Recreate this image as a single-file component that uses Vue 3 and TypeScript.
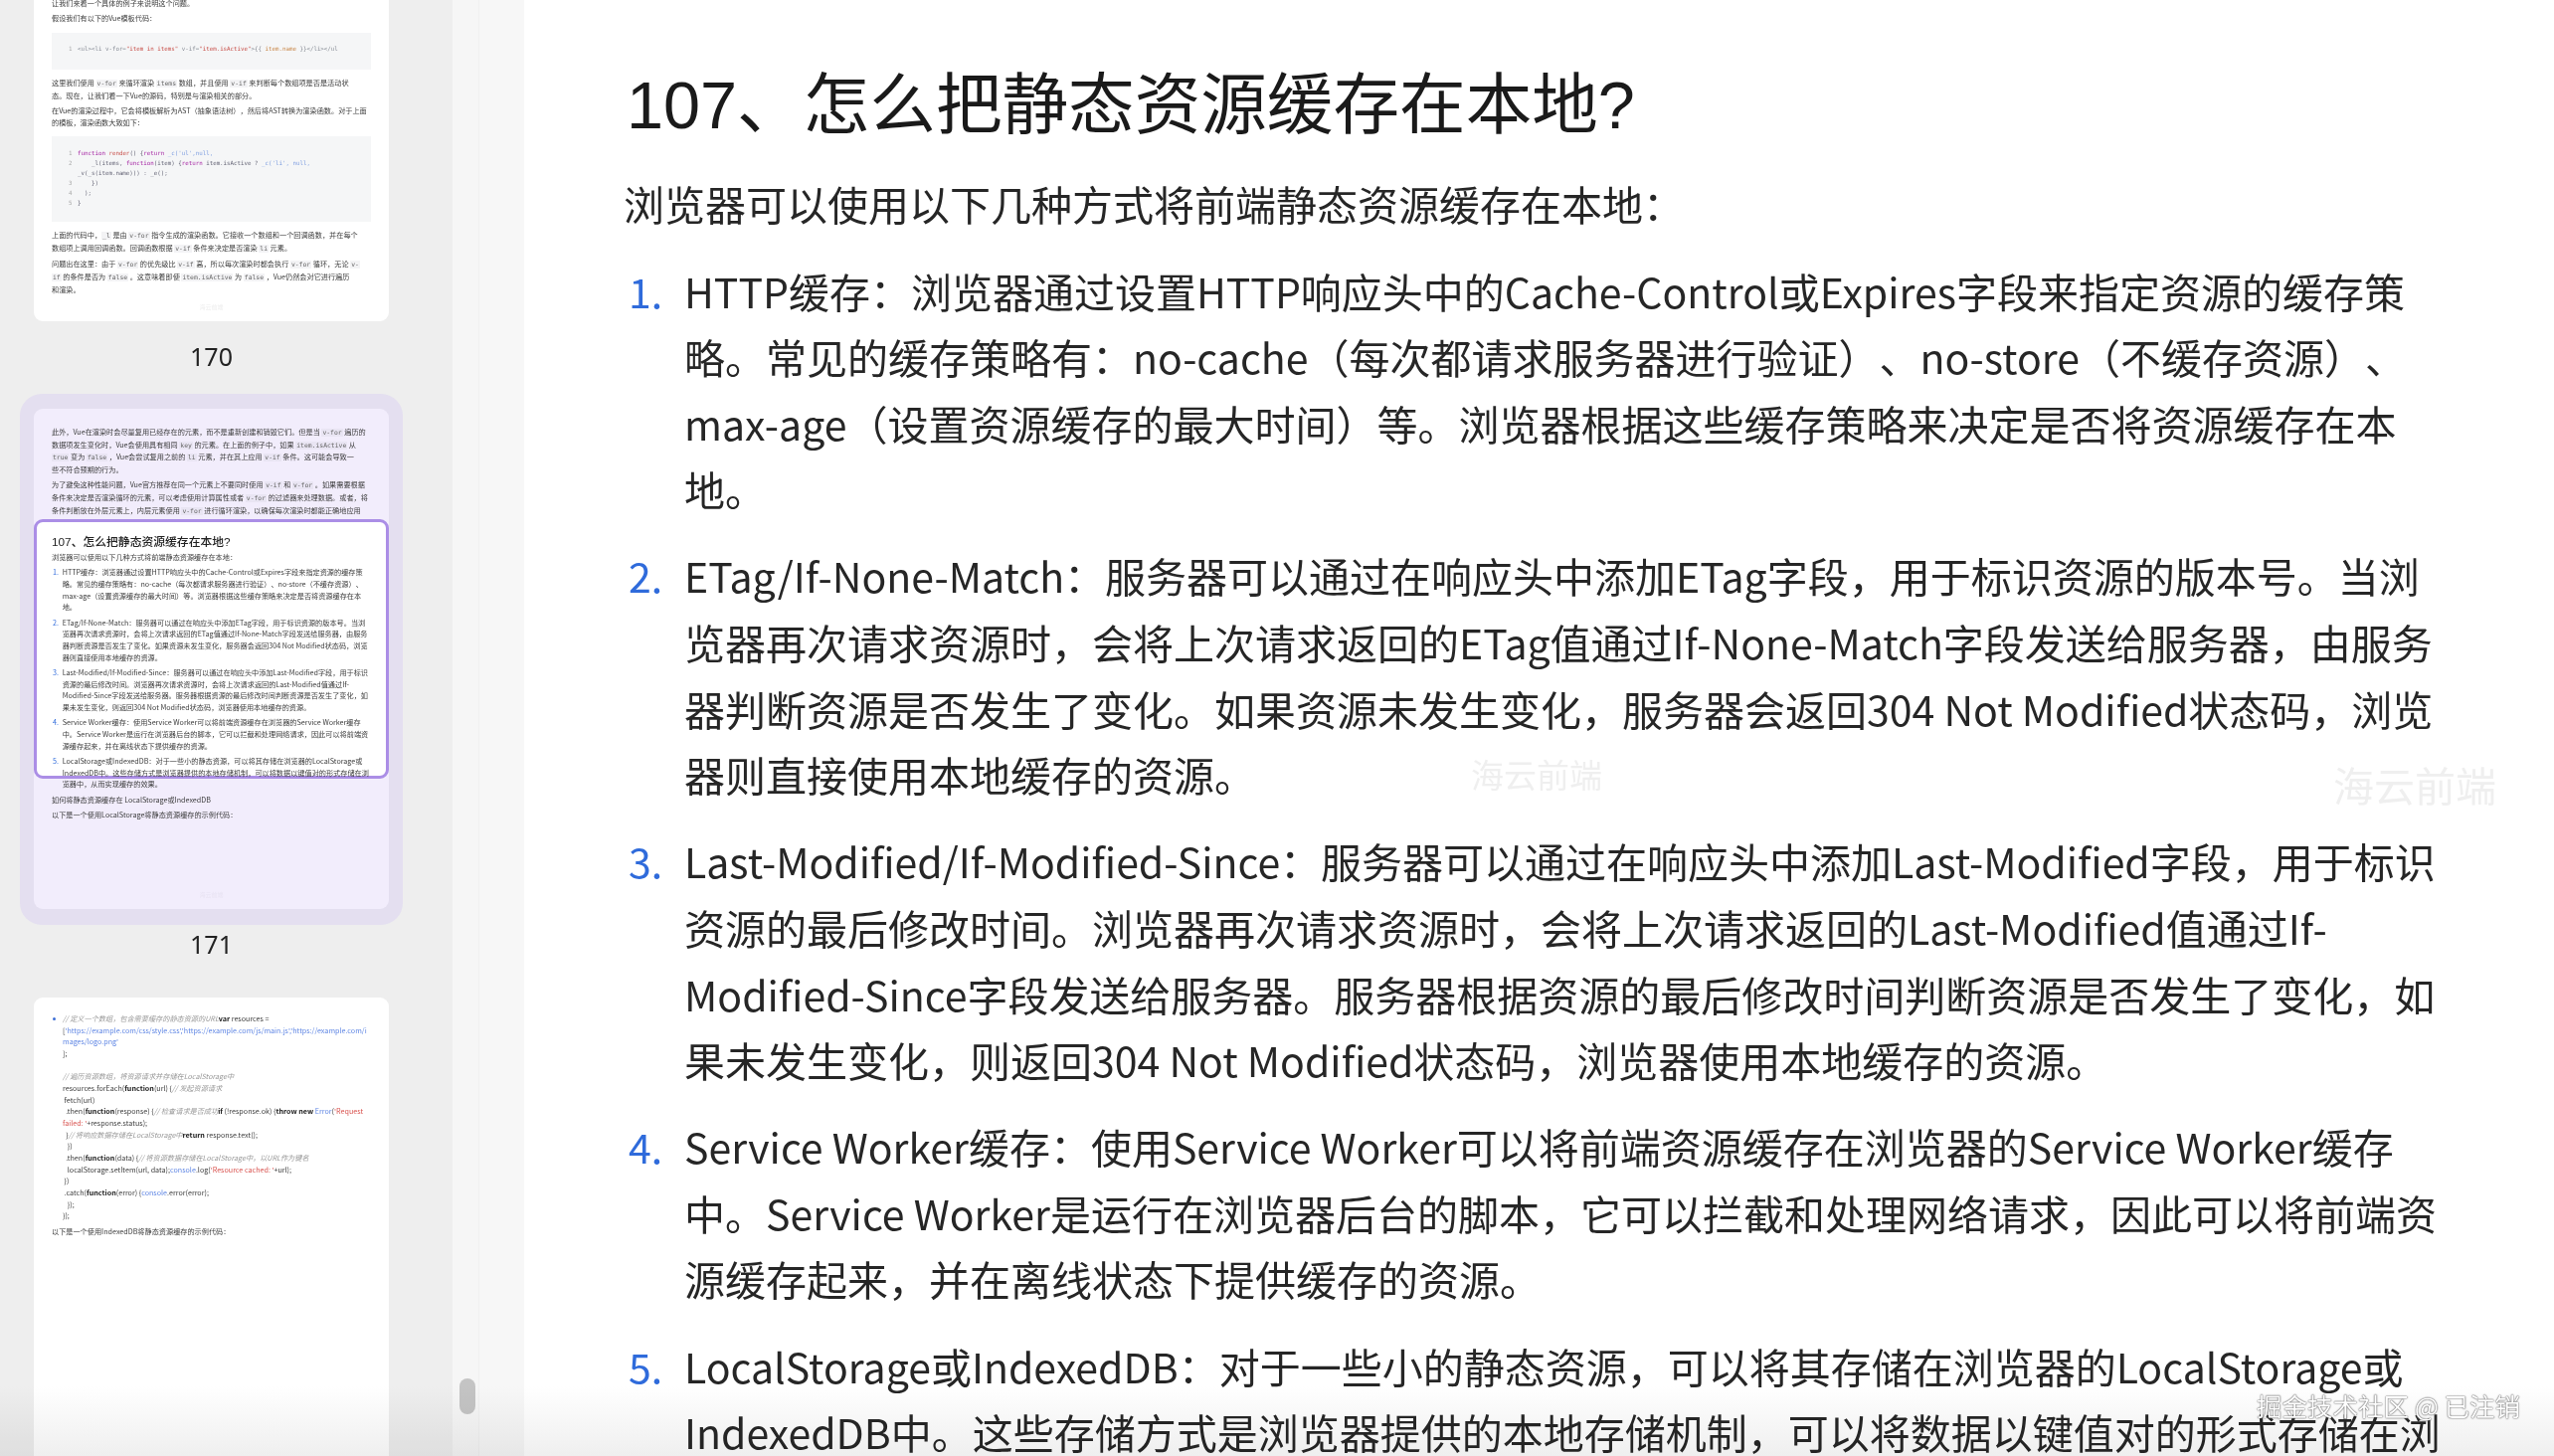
<template>
  <div class="viewer">
    <aside class="sidebar">
      <div class="thumbs">
        <!-- 170 -->
        <div class="page page--170">
          <div class="mini">
            <p>让我们来看一个具体的例子来说明这个问题。</p>
            <p>假设我们有以下的Vue模板代码：</p>
            <div class="code code--one">
              <div><i>1</i><span class="c-gray">&lt;ul&gt;&lt;li v-for=</span><span class="c-red">"item in items"</span><span class="c-gray"> v-if=</span><span class="c-red">"item.isActive"</span><span class="c-gray" v-text="mustOpen"></span><span class="c-orange">item.name</span><span class="c-gray" v-text="mustClose"></span></div>
            </div>
            <p>这里我们使用 <code>v-for</code> 来循环渲染 <code>items</code> 数组，并且使用 <code>v-if</code> 来判断每个数组项是否是活动状<br>态。现在，让我们看一下Vue的源码，特别是与渲染相关的部分。</p>
            <p>在Vue的渲染过程中，它会将模板解析为AST（抽象语法树），然后将AST转换为渲染函数。对于上面<br>的模板，渲染函数大致如下：</p>
            <div class="code">
              <div><i>1</i><span class="c-purple">function</span> <span class="c-red">render</span>() {<span class="c-purple">return</span> <span class="c-blue">_c('ul',null,</span></div>
              <div><i>2</i>&nbsp;&nbsp;&nbsp;&nbsp;_l(items, <span class="c-purple">function</span>(item) {<span class="c-purple">return</span> item.isActive ? <span class="c-blue">_c('li', null,</span></div>
              <div><i></i>_v(_s(item.name))) : _e();</div>
              <div><i>3</i>&nbsp;&nbsp;&nbsp;&nbsp;})</div>
              <div><i>4</i>&nbsp;&nbsp;);</div>
              <div><i>5</i>}</div>
            </div>
            <p>上面的代码中，<code>_l</code> 是由 <code>v-for</code> 指令生成的渲染函数。它接收一个数组和一个回调函数，并在每个<br>数组项上调用回调函数。回调函数根据 <code>v-if</code> 条件来决定是否渲染 <code>li</code> 元素。</p>
            <p>问题出在这里：由于 <code>v-for</code> 的优先级比 <code>v-if</code> 高，所以每次渲染时都会执行 <code>v-for</code> 循环，无论 <code>v-</code><br><code>if</code> 的条件是否为 <code>false</code> 。这意味着即使 <code>item.isActive</code> 为 <code>false</code> ，Vue仍然会对它进行遍历<br>和渲染。</p>
          </div>
          <span class="page-mark">海云前端</span>
        </div>
        <div class="page-num page-num--first">170</div>

        <!-- 171，当前页 -->
        <div class="current">
          <div class="page page--171">
            <div class="viewport"></div>
            <div class="mini">
              <p>此外，Vue在渲染时会尽量复用已经存在的元素，而不是重新创建和销毁它们。但是当 <code>v-for</code> 遍历的<br>数据项发生变化时，Vue会使用具有相同 <code>key</code> 的元素。在上面的例子中，如果 <code>item.isActive</code> 从<br><code>true</code> 变为 <code>false</code> ，Vue会尝试复用之前的 <code>li</code> 元素，并在其上应用 <code>v-if</code> 条件。这可能会导致一<br>些不符合预期的行为。</p>
              <p>为了避免这种性能问题，Vue官方推荐在同一个元素上不要同时使用 <code>v-if</code> 和 <code>v-for</code> 。如果需要根据<br>条件来决定是否渲染循环的元素，可以考虑使用计算属性或者 <code>v-for</code> 的过滤器来处理数据。或者，将<br>条件判断放在外层元素上，内层元素使用 <code>v-for</code> 进行循环渲染，以确保每次渲染时都能正确地应用</p>
              <h4>{{ title }}</h4>
              <p class="mini-intro">{{ intro }}</p>
              <ol class="mini-list">
                <li v-for="(item, i) in items" :key="i">
                  <span class="mini-no">{{ i + 1 }}.</span>
                  <div>
                    <div v-for="(line, j) in item" :key="j">{{ line }}</div>
                  </div>
                </li>
              </ol>
              <p>如何将静态资源缓存在 LocalStorage或IndexedDB</p>
              <p>以下是一个使用LocalStorage将静态资源缓存的示例代码：</p>
            </div>
            <span class="page-mark">海云前端</span>
          </div>
        </div>
        <div class="page-num">171</div>

        <!-- 172 -->
        <div class="page page--172">
          <div class="mini">
            <div class="script">
              <span class="script-dot"></span>
              <div>
                <div v-for="(line, i) in scriptLines" :key="i" class="script-line">
                  <span v-for="(part, j) in line" :key="j" :class="part[0]">{{ part[1] }}</span>
                </div>
              </div>
            </div>
            <p class="after-script">以下是一个使用IndexedDB将静态资源缓存的示例代码：</p>
          </div>
        </div>
      </div>
    </aside>

    <div class="rail">
      <div class="rail-thumb"></div>
    </div>
    <div class="gutter"></div>

    <main class="content">
      <h1>{{ title }}</h1>
      <p class="intro">{{ intro }}</p>
      <ol class="list">
        <li v-for="(item, i) in items" :key="i">
          <span class="no">{{ i + 1 }}.</span>
          <div>
            <div v-for="(line, j) in item" :key="j" class="line">{{ line }}</div>
          </div>
        </li>
      </ol>
      <span class="wm wm--a">海云前端</span>
      <span class="wm wm--b">海云前端</span>
    </main>

    <div class="fade"></div>
    <div class="credit">掘金技术社区 @ 已注销</div>
  </div>
</template>

<script setup lang="ts">
const title = '107、怎么把静态资源缓存在本地?'
const intro = '浏览器可以使用以下几种方式将前端静态资源缓存在本地：'

// 模板里写不了双花括号
const mustOpen = '>{' + '{ '
const mustClose = ' }' + '}</li></ul'

const items: string[][] = [
  [
    'HTTP缓存：浏览器通过设置HTTP响应头中的Cache-Control或Expires字段来指定资源的缓存策',
    '略。常见的缓存策略有：no-cache（每次都请求服务器进行验证）、no-store（不缓存资源）、',
    'max-age（设置资源缓存的最大时间）等。浏览器根据这些缓存策略来决定是否将资源缓存在本',
    '地。',
  ],
  [
    'ETag/If-None-Match：服务器可以通过在响应头中添加ETag字段，用于标识资源的版本号。当浏',
    '览器再次请求资源时，会将上次请求返回的ETag值通过If-None-Match字段发送给服务器，由服务',
    '器判断资源是否发生了变化。如果资源未发生变化，服务器会返回304 Not Modified状态码，浏览',
    '器则直接使用本地缓存的资源。',
  ],
  [
    'Last-Modified/If-Modified-Since：服务器可以通过在响应头中添加Last-Modified字段，用于标识',
    '资源的最后修改时间。浏览器再次请求资源时，会将上次请求返回的Last-Modified值通过If-',
    'Modified-Since字段发送给服务器。服务器根据资源的最后修改时间判断资源是否发生了变化，如',
    '果未发生变化，则返回304 Not Modified状态码，浏览器使用本地缓存的资源。',
  ],
  [
    'Service Worker缓存：使用Service Worker可以将前端资源缓存在浏览器的Service Worker缓存',
    '中。Service Worker是运行在浏览器后台的脚本，它可以拦截和处理网络请求，因此可以将前端资',
    '源缓存起来，并在离线状态下提供缓存的资源。',
  ],
  [
    'LocalStorage或IndexedDB：对于一些小的静态资源，可以将其存储在浏览器的LocalStorage或',
    'IndexedDB中。这些存储方式是浏览器提供的本地存储机制，可以将数据以键值对的形式存储在浏',
    '览器中，从而实现缓存的效果。',
  ],
]

// [class, text]
const scriptLines: [string, string][][] = [
  [['s-com', '// 定义一个数组，包含需要缓存的静态资源的URL'], ['s-key', 'var'], ['', ' resources =']],
  [['', '['], ['s-link', "'https://example.com/css/style.css','https://example.com/js/main.js','https://example.com/i"]],
  [['s-link', "mages/logo.png'"]],
  [['', '];']],
  [['', '\u00a0']],
  [['s-com', '// 遍历资源数组，将资源请求并存储在LocalStorage中']],
  [['', 'resources.forEach('], ['s-key', 'function'], ['', '(url) {'], ['s-com', '// 发起资源请求']],
  [['', '\u00a0fetch(url)']],
  [['', '\u00a0\u00a0.then('], ['s-key', 'function'], ['', '(response) {'], ['s-com', '// 检查请求是否成功'], ['s-key', 'if'], ['', ' (!response.ok) {'], ['s-key', 'throw new'], ['', ' '], ['s-link', 'Error'], ['', '('], ['s-str', "'Request"]],
  [['s-str', "failed: '"], ['', '+response.status);']],
  [['', '\u00a0\u00a0}'], ['s-com', '// 将响应数据存储在LocalStorage中'], ['s-key', 'return'], ['', ' response.text();']],
  [['', '\u00a0\u00a0\u00a0})']],
  [['', '\u00a0\u00a0.then('], ['s-key', 'function'], ['', '(data) {'], ['s-com', '// 将资源数据存储在LocalStorage中，以URL作为键名']],
  [['', '\u00a0\u00a0\u00a0localStorage.setItem(url, data);'], ['s-link', 'console'], ['', '.log('], ['s-str', "'Resource cached: '"], ['', '+url);']],
  [['', '\u00a0})']],
  [['', '\u00a0.catch('], ['s-key', 'function'], ['', '(error) {'], ['s-link', 'console'], ['', '.error(error);']],
  [['', '\u00a0\u00a0\u00a0});']],
  [['', '});']],
]
</script>

<style scoped>
.viewer {
  position: relative;
  display: flex;
  height: 1464px;
  overflow: hidden;
  background: #fff;
  font-family: "Noto Sans CJK SC", "Noto Sans", sans-serif;
  color: #222;
  text-spacing-trim: space-all;
}

.sidebar {
  width: 455px;
  flex-shrink: 0;
  background: #eeeeee;
  overflow: hidden;
}

.thumbs {
  margin-top: -180px;
  padding-left: 34px;
}

.page {
  position: relative;
  width: 357px;
  height: 503px;
  box-sizing: border-box;
  background: #fff;
  border-radius: 9px;
  overflow: hidden;
}

.page--171 {
  background: #f2edfc;
}

.page--172 {
  height: 620px;
  margin-top: 38px;
}

.mini {
  position: relative;
  padding: 0 18px;
  font-size: 7.17px;
  line-height: 11.67px;
  color: #3c3c3c;
  white-space: nowrap;
  filter: blur(0.3px);
}

.page--170 .mini {
  padding-top: 178px;
}

.page--171 .mini {
  padding-top: 18px;
}

.page--172 .mini {
  padding-top: 16px;
}

.mini p {
  margin: 0 0 3.6px;
}

.mini code {
  font-family: "DejaVu Sans Mono", monospace;
  font-size: 6.4px;
  background: #f3f3f5;
  padding: 0 1px;
  color: #666;
}

.page--171 .mini code {
  background: #e9e5f3;
}

.code {
  margin: 8px 0 8px;
  padding: 12px 0 14px 17px;
  background: #f5f6f7;
  font-family: "DejaVu Sans Mono", monospace;
  font-size: 5.8px;
  line-height: 10px;
  color: #667;
}

.code--one {
  padding: 11px 0 16px 17px;
}

.code i {
  display: inline-block;
  width: 9px;
  font-style: normal;
  color: #aaa;
}

.c-gray { color: #8a8f98; }
.c-red { color: #c8504a; }
.c-orange { color: #c9884a; }
.c-purple { color: #a626a4; }
.c-blue { color: #7f9fe0; }

.page-mark {
  position: absolute;
  left: 0;
  right: 0;
  bottom: 10px;
  text-align: center;
  font-size: 6px;
  color: #eee;
}

.page--171 .page-mark {
  color: #e8e3f2;
}

.viewport {
  position: absolute;
  top: 111px;
  left: 0;
  right: 0;
  height: 261px;
  box-sizing: border-box;
  background: #fff;
  border: 3px solid #ab8ee6;
  border-radius: 9px;
}

.mini h4 {
  margin: 16px 0 1px;
  font-size: 11.8px;
  line-height: 18px;
  font-weight: 500;
  color: #222;
  font-family: "Liberation Sans", "Noto Sans CJK SC", sans-serif;
}

.mini .mini-intro {
  margin: 0 0 3.5px;
}

.mini-list {
  list-style: none;
  margin: 0 0 3.6px;
  padding: 0;
}

.mini-list li {
  display: flex;
  margin-bottom: 3.6px;
}

.mini-no {
  width: 10.7px;
  padding-left: 1px;
  box-sizing: border-box;
  flex-shrink: 0;
  color: #2f6bdb;
}

.page-num {
  width: 357px;
  margin-top: 3px;
  text-align: center;
  font-size: 25px;
  line-height: 32px;
  color: #222;
  font-family: "Noto Sans", sans-serif;
}

.page-num--first {
  margin-top: 19px;
  margin-bottom: 22px;
}

.current {
  width: 385px;
  margin-left: -14px;
  box-sizing: border-box;
  padding: 15px 14px 16px;
  background: #e4dff0;
  border-radius: 22px;
}

.script {
  display: flex;
}

.script-dot {
  width: 3px;
  height: 3px;
  margin: 4px 7px 0 1px;
  border-radius: 50%;
  background: #3d6fd6;
  flex-shrink: 0;
}

.script-line {
  white-space: pre;
}

.s-com { color: #999; font-style: italic; }
.s-key { color: #222; font-weight: 700; }
.s-link { color: #5f86e4; }
.s-str { color: #d9534f; }

.mini .after-script {
  margin-top: 3.6px;
}

.rail {
  width: 27px;
  flex-shrink: 0;
  box-sizing: border-box;
  padding: 1386px 0 0 7px;
  background: #f6f6f6;
  border-right: 1px solid #f0f0f0;
}

.rail-thumb {
  width: 16px;
  height: 36px;
  border-radius: 8px;
  background: #c4c4c4;
}

.gutter {
  width: 45px;
  flex-shrink: 0;
  background: #f7f7f7;
}

.content {
  position: relative;
  flex: 1;
  min-width: 0;
  box-sizing: border-box;
  padding: 61px 0 0 100px;
  font-size: 41px;
  line-height: 66.6px;
  color: #262626;
  white-space: nowrap;
}

.content h1 {
  margin: 0 0 20px 3px;
  font-size: 66.6px;
  line-height: 90px;
  font-weight: 400;
  color: #1a1a1a;
  font-family: "Liberation Sans", "Noto Sans CJK SC", sans-serif;
}

.intro {
  margin: 0 0 21px;
}

.list {
  list-style: none;
  margin: 0;
  padding: 0;
}

.list li {
  display: flex;
  margin-bottom: 20.5px;
}

.no {
  width: 61px;
  padding-left: 5px;
  box-sizing: border-box;
  flex-shrink: 0;
  color: #2f6bdb;
}

.wm {
  position: absolute;
  color: #efefef;
  line-height: 1;
}

.wm--a {
  left: 952px;
  top: 762px;
  font-size: 33px;
}

.wm--b {
  left: 1819px;
  top: 768px;
  font-size: 41px;
}

.fade {
  position: absolute;
  left: 0;
  right: 0;
  bottom: 0;
  height: 70px;
  background: linear-gradient(to bottom, #fff, #efefef);
  mix-blend-mode: multiply;
  pointer-events: none;
}

.credit {
  position: absolute;
  right: 34px;
  top: 1395px;
  font-size: 25.5px;
  line-height: 36px;
  color: #fff;
  text-shadow: 0 0 1px #333, 0 0 2px #777;
}
</style>
